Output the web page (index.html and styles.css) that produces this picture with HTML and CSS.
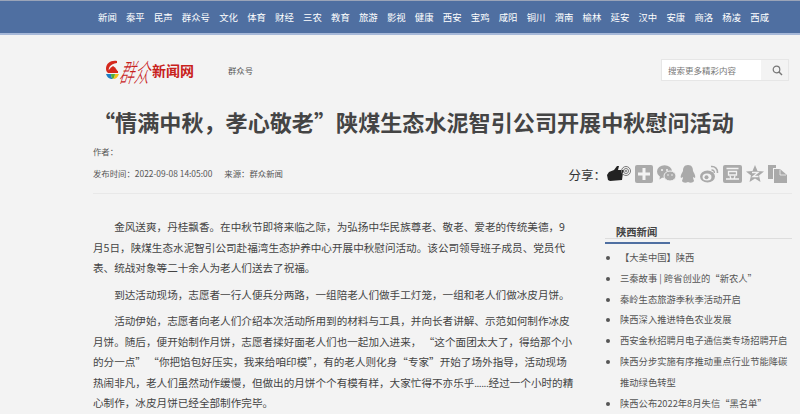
FILE: index.html
```html
<!DOCTYPE html>
<html lang="zh-CN">
<head>
    <meta charset="UTF-8">
    <title>“情满中秋，孝心敬老”陕煤生态水泥智引公司开展中秋慰问活动</title>
    <link rel="stylesheet" href="styles.css">
</head>
<body>

<div class="nav">
    <a>新闻</a><a>秦平</a><a>民声</a><a>群众号</a><a>文化</a><a>体育</a><a>财经</a><a>三农</a><a>教育</a><a>旅游</a><a>影视</a><a>健康</a><a>西安</a><a>宝鸡</a><a>咸阳</a><a>铜川</a><a>渭南</a><a>榆林</a><a>延安</a><a>汉中</a><a>安康</a><a>商洛</a><a>杨凌</a><a>西咸</a>
</div>

<div class="header">
    <div class="logo">
        <svg class="logo-mark" width="14" height="20" viewBox="0 0 14 20">
            <path d="M12 1 C6 0 1 3 1 9 C1 11 2 12 3 13 L13 13 L13 11 L4 11 C3 8 5 4 12 3 Z" fill="#d4281c"/>
            <path d="M3 11 L6 7.500 L8 6 L10 7.500 L12.500 11 Z" fill="#d4281c"/>
            <path d="M1 14 L6 14 C6 17 7 18 8 19 C4 19 2 17 1 14 Z" fill="#1f7fc4"/>
            <path d="M6 14 L10 14 C10 16 9 18 8 19 C7 18 6 17 6 14 Z" fill="#52ad3a"/>
            <path d="M10 14 L14 14 C13 17 11 19 8 19 C9 18 10 16 10 14 Z" fill="#f0c21d"/>
        </svg>
        <span class="logo-brush">群众</span><span class="logo-name">新闻网</span>
    </div>
    <span class="channel">群众号</span>
    <div class="search">
        <div class="search-input">搜索更多精彩内容</div>
        <div class="search-btn">
            <svg width="11" height="11" viewBox="0 0 11 11"><circle cx="4.500" cy="4.500" r="3.300" fill="none" stroke="#777" stroke-width="1.200"/><path d="M7 7 L10 10" stroke="#777" stroke-width="1.400"/></svg>
        </div>
    </div>
</div>

<h1 class="title">“情满中秋，孝心敬老”陕煤生态水泥智引公司开展中秋慰问活动</h1>

<div class="meta">
    <div class="meta-text">
        <div class="author">作者：</div>
        <div class="pubinfo"><span>发布时间：2022-09-08 14:05:00</span><span>来源：群众新闻</span></div>
    </div>
    <div class="share">
        <span class="share-label">分享：</span>
        <svg width="24" height="17" viewBox="0 0 24 17"><path d="M0 10 L2 7 L7 5 L10 1 L12 1 L11 5 L17 5 Q18 6.500 16 7.500 L15 15 L3 16 L1 15 Z" fill="#222"/><circle cx="19" cy="6" r="4.500" fill="none" stroke="#777"/><circle cx="19" cy="6" r="2.500" fill="none" stroke="#777"/><circle cx="19" cy="6" r="1" fill="#777"/></svg>
        <svg width="18" height="18" viewBox="0 0 18 18"><rect width="18" height="18" rx="2" fill="#aaa"/><path d="M7.500 3 H10.500 V7.500 H15 V10.500 H10.500 V15 H7.500 V10.500 H3 V7.500 H7.500 Z" fill="#f3f3f3"/></svg>
        <svg width="19" height="17" viewBox="0 0 19 17"><ellipse cx="7.500" cy="6.500" rx="7.500" ry="6.300" fill="#aaa"/><path d="M3 11 L2.500 14.500 L6 12 Z" fill="#aaa"/><circle cx="5" cy="5" r="1" fill="#f3f3f3"/><circle cx="10" cy="5" r="1" fill="#f3f3f3"/><ellipse cx="13" cy="11" rx="6" ry="5" fill="#aaa" stroke="#f3f3f3"/><circle cx="11" cy="10" r=".8" fill="#f3f3f3"/><circle cx="15" cy="10" r=".8" fill="#f3f3f3"/></svg>
        <svg width="16" height="18" viewBox="0 0 16 18"><path d="M8 0 C12 0 13 3 13 6 C14 8 16 11 15 13 L13 12 C13 14 14 15 14 16 C13 18 10 18 8 17 C6 18 3 18 2 16 C2 15 3 14 3 12 L1 13 C0 11 2 8 3 6 C3 3 4 0 8 0 Z" fill="#aaa"/></svg>
        <svg width="19" height="18" viewBox="0 0 19 18"><ellipse cx="7.500" cy="11.500" rx="7.500" ry="6" fill="#aaa"/><ellipse cx="7" cy="12" rx="4.500" ry="3.500" fill="#f3f3f3"/><circle cx="6.500" cy="12.300" r="2" fill="#aaa"/><path d="M11 1.500 C15 1 18 4 17.500 8" fill="none" stroke="#aaa" stroke-width="1.600"/><path d="M11.500 5 C13.500 4.800 14.500 6 14.300 8" fill="none" stroke="#aaa" stroke-width="1.400"/></svg>
        <svg width="19" height="18" viewBox="0 0 19 18"><rect width="19" height="18" rx="2" fill="#aaa"/><path d="M3.500 3.500 H15.500 M5.500 6.500 H13.500 V10 H5.500 Z M3 14 H16 M7 11 L8 14 M12 11 L11 14" fill="none" stroke="#f3f3f3" stroke-width="1.300"/></svg>
        <svg width="18" height="17" viewBox="0 0 18 17"><path d="M9 0 L11.500 6 L18 6.500 L13 10.500 L14.500 17 L9 13.500 L3.500 17 L5 10.500 L0 6.500 L6.500 6 Z" fill="#aaa"/><path d="M6 7.500 H12 L7 11.500 H12.500" fill="none" stroke="#f3f3f3" stroke-width="1.300"/></svg>
        <svg width="19" height="18" viewBox="0 0 19 18"><path d="M0 0 H8 V3 H5 V14 H0 Z" fill="#aaa"/><path d="M6 4 H12 L19 10 V18 H6 Z" fill="#aaa"/><path d="M12 4.500 V10 H18" fill="none" stroke="#f3f3f3" stroke-width=".8"/></svg>
    </div>
</div>

<div class="main">
    <div class="article">
        <p>金风送爽，丹桂飘香。在中秋节即将来临之际，为弘扬中华民族尊老、敬老、爱老的传统美德，9月5日，陕煤生态水泥智引公司赴福湾生态护养中心开展中秋慰问活动。该公司领导班子成员、党员代表、统战对象等二十余人为老人们送去了祝福。</p>
        <p>到达活动现场，志愿者一行人便兵分两路，一组陪老人们做手工灯笼，一组和老人们做冰皮月饼。</p>
        <p>活动伊始，志愿者向老人们介绍本次活动所用到的材料与工具，并向长者讲解、示范如何制作冰皮月饼。随后，便开始制作月饼，志愿者揉好面老人们也一起加入进来， “这个面团太大了，得给那个小的分一点” “你把馅包好压实，我来给咱印模”，有的老人则化身“专家”开始了场外指导，活动现场热闹非凡，老人们虽然动作缓慢，但做出的月饼个个有模有样，大家忙得不亦乐乎<span class="dots">......</span>经过一个小时的精心制作，冰皮月饼已经全部制作完毕。</p>
    </div>
    <div class="side">
        <div class="side-head"><span>陕西新闻</span></div>
        <ul class="side-list">
            <li>【大美中国】陕西</li>
            <li>三秦故事 | 跨省创业的“新农人”</li>
            <li>秦岭生态旅游季秋季活动开启</li>
            <li>陕西深入推进特色农业发展</li>
            <li>西安金秋招聘月电子通信类专场招聘开启</li>
            <li>陕西分步实施有序推动重点行业节能降碳推动绿色转型</li>
            <li>陕西公布2022年8月失信“黑名单”</li>
        </ul>
    </div>
</div>

</body>
</html>
```

FILE: styles.css
```css
* {
    box-sizing: border-box;
}

html, body {
    height: 414px;
    overflow: hidden;
}

body {
    margin: 0;
    background-color: #f3f3f3;
    color: #333;
    font-family: "Noto Sans CJK SC", "Liberation Sans", sans-serif;
}

.nav {
    display: flex;
    gap: 9.2px;
    height: 35px;
    padding-left: 98px;
    align-items: center;
    background-color: #4f6fa1;
    border-top: 1px solid #9aa4b8;
    border-bottom: 2px solid #a6b8d8;
    color: #fff;
    font-size: 9.4px;
}

.header {
    display: flex;
    align-items: center;
    height: 70px;
    padding: 0 11px 0 105px;
}

.logo {
    display: flex;
    align-items: center;
    width: 123px;
}

.logo-mark {
    margin-right: 3px;
}

.logo-brush {
    color: #c8211b;
    font-size: 15px;
    font-weight: 300;
    transform: skewX(-18deg) scaleY(1.7);
}

.logo-name {
    color: #c8211b;
    font-size: 14px;
    font-weight: bold;
}

.channel {
    color: #555;
    font-size: 8.4px;
}

.search {
    display: flex;
    margin-left: auto;
    width: 128px;
    height: 22px;
    border: 1px solid #e6e6e6;
}

.search-input {
    width: 99px;
    padding-left: 6px;
    background-color: #fff;
    color: #777;
    font-size: 8.5px;
    line-height: 20px;
}

.search-btn {
    flex: 1;
    display: flex;
    align-items: center;
    justify-content: center;
    padding-left: 6px;
}

.title {
    margin: 0;
    padding-left: 93px;
    color: #444;
    font-size: 22.1px;
    line-height: 32px;
    font-weight: bold;
    white-space: nowrap;
}

.meta {
    display: flex;
    justify-content: space-between;
    height: 57px;
    margin: 0 8px 0 93px;
    padding-top: 9px;
    border-bottom: 1px solid #e8e8e8;
}

.meta-text {
    color: #555;
    font-size: 8.4px;
}

.author {
    line-height: 11px;
}

.pubinfo {
    display: flex;
    gap: 12px;
    margin-top: 11px;
    line-height: 11px;
}

.share {
    display: flex;
    align-items: flex-start;
    gap: 4px;
    padding: 19px 5px 0 0;
}

.share-label {
    color: #333;
    font-size: 12.5px;
    line-height: 19px;
    margin-right: -3px;
}

.main {
    display: flex;
    justify-content: space-between;
    padding: 23px 8px 0 93px;
}

.article {
    width: 481px;
    color: #444;
    font-size: 10.6px;
    line-height: 20.5px;
}

.article p {
    margin: 0 0 6px;
    text-indent: 2em;
}

.dots {
    font-size: 8.5px;
}

.side {
    width: 187px;
}

.side-head {
    height: 22px;
    border-bottom: 1px solid #ddd;
}

.side-head span {
    display: inline-block;
    width: 65px;
    height: 22px;
    padding-left: 11px;
    border-bottom: 2px solid #4f6fa1;
    color: #444;
    font-size: 10.3px;
    font-weight: bold;
    line-height: 20px;
}

.side-list {
    margin: 8px 0 0;
    padding: 0 0 0 15px;
    color: #555;
    font-size: 9.3px;
    line-height: 20.8px;
}
```
